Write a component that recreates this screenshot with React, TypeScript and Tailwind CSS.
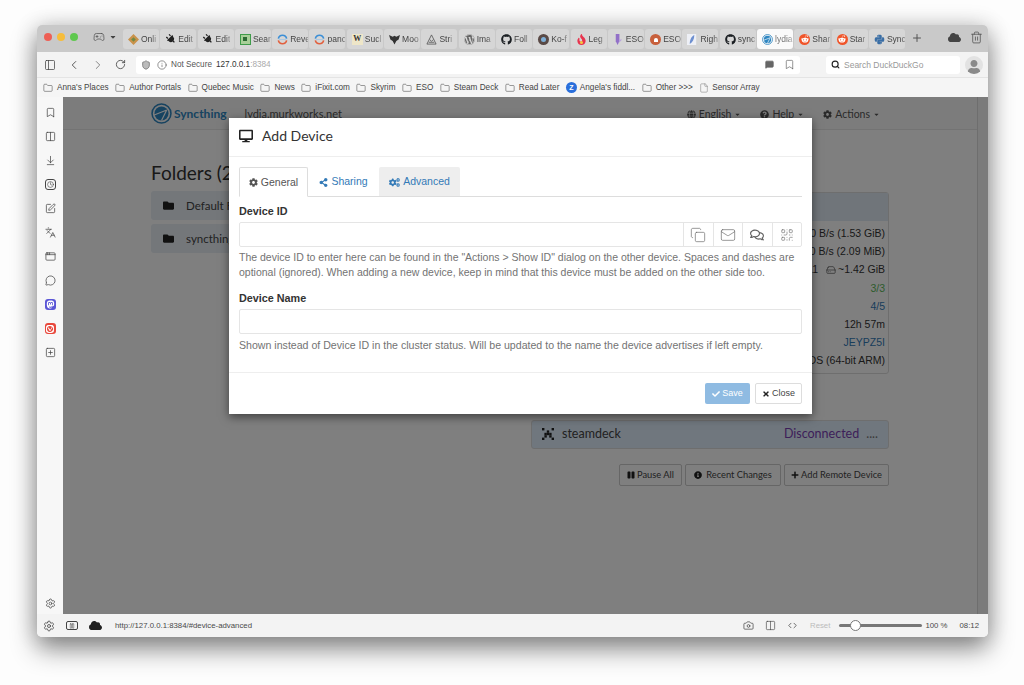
import type { ReactNode } from "react";
import {
  ArrowDownToLine,
  Bookmark,
  Camera,
  ChevronLeft,
  ChevronRight,
  Clock,
  Code,
  Copy,
  File,
  Folder,
  HardDrive,
  Mail,
  MessageCircle,
  PanelLeft,
  Plus,
  QrCode,
  RotateCw,
  Search,
  Settings,
  Shield,
  SquarePen,
  SquarePlus,
  Trash2,
  Columns2,
  Pause,
  Gamepad2,
  Info,
  Languages,
  AppWindow,
  MessageSquare,
} from "lucide-react";
import {
  FaCaretDown,
  FaCheck,
  FaCloud,
  FaCog,
  FaCogs,
  FaDesktop,
  FaFolder,
  FaGithub,
  FaGlobe,
  FaInfoCircle,
  FaMastodon,
  FaPause,
  FaPlus,
  FaPlug,
  FaPython,
  FaQuestionCircle,
  FaRedditAlien,
  FaRegComments,
  FaShareAlt,
  FaTimes,
  FaUser,
  FaWordpress,
  FaFire,
} from "react-icons/fa";
import { SiVivaldi } from "react-icons/si";

function Logo({ size }: { size: number }) {
  return (
    <svg width={size} height={size} viewBox="0 0 24 24" fill="none" className="shrink-0">
      <circle cx="12" cy="12" r="10.8" stroke="#2e86c1" strokeWidth="1.8" />
      <circle cx="12" cy="12" r="8" fill="#2e86c1" />
      <path d="M3 14 L18 8 M18 8 L12 20" stroke="#fff" strokeWidth="1.4" />
    </svg>
  );
}

function Circle({ bg, children }: { bg: string; children?: ReactNode }) {
  return (
    <span className={`flex h-[11px] w-[11px] shrink-0 items-center justify-center rounded-full ${bg}`}>{children}</span>
  );
}

function Arcs() {
  return (
    <svg width="11" height="11" viewBox="0 0 12 12" fill="none">
      <path d="M1.5 5 A4.6 4.6 0 0 1 10.5 5" stroke="#3c8fd6" strokeWidth="1.8" />
      <path d="M10.5 7 A4.6 4.6 0 0 1 1.5 7" stroke="#e2603e" strokeWidth="1.8" />
      <path d="M2 6 H10" stroke="#9cc4e8" strokeWidth="0.8" />
    </svg>
  );
}

const plug = <FaPlug className="h-[10px] w-[10px] -rotate-45 text-[#222]" />;
const reddit = (
  <Circle bg="bg-[#f0552a]">
    <FaRedditAlien className="h-[8px] w-[8px] text-white" />
  </Circle>
);

const tabs: { label: string; icon: ReactNode; active?: boolean }[] = [
  {
    label: "Onli",
    icon: (
      <svg width="11" height="11" viewBox="0 0 12 12">
        <path d="M6 0 L12 6 L6 12 L0 6 Z" fill="#c9924a" />
        <path d="M6 3.5 L8.5 6 L6 8.5 L3.5 6 Z" fill="#6f8a45" />
      </svg>
    ),
  },
  { label: "Edit", icon: plug },
  { label: "Edit", icon: plug },
  {
    label: "Sear",
    icon: (
      <span className="flex h-[11px] w-[11px] items-center justify-center border-[1.5px] border-[#3f9b4a] bg-[#a8cf98]">
        <span className="h-[4px] w-[4px] bg-[#2d6a35]" />
      </span>
    ),
  },
  { label: "Reve", icon: <Arcs /> },
  { label: "panc", icon: <Arcs /> },
  {
    label: "Sucl",
    icon: (
      <span className="flex h-[11px] w-[11px] items-center justify-center bg-[#eee6c8] font-['Liberation_Serif',serif] text-[8px] font-bold leading-none text-[#333]">
        W
      </span>
    ),
  },
  {
    label: "Moo",
    icon: (
      <svg width="11" height="11" viewBox="0 0 12 12">
        <path d="M0 1 L4 3 L6 2 L8 3 L12 1 L10.5 6 L8 7.5 L6 11.5 L4 7.5 L1.5 6 Z" fill="#333" />
      </svg>
    ),
  },
  {
    label: "Stri",
    icon: (
      <svg width="11" height="11" viewBox="0 0 12 12" fill="none" stroke="#555" strokeWidth="0.9">
        <path d="M6 1 L11 11 H1 Z M4 6 L6 8 L8 6 M3 9 H9" />
      </svg>
    ),
  },
  { label: "Ima", icon: <FaWordpress className="h-[11px] w-[11px] text-[#666]" /> },
  { label: "Foll", icon: <FaGithub className="h-[11px] w-[11px] text-[#1b1f23]" /> },
  {
    label: "Ko-f",
    icon: (
      <Circle bg="bg-[#5a4a46]">
        <span className="h-[5px] w-[5px] rounded-full bg-[#7fb0d8]" />
      </Circle>
    ),
  },
  {
    label: "Leg",
    icon: (
      <span className="relative flex h-[11px] w-[11px] items-center justify-center">
        <FaFire className="h-[11px] w-[11px] text-[#e8344e]" />
        <span className="absolute bottom-[1px] h-[3px] w-[3px] rounded-full bg-[#f5c842]" />
      </span>
    ),
  },
  {
    label: "ESO",
    icon: (
      <svg width="11" height="11" viewBox="0 0 12 12">
        <path d="M3 0 H7 V8 L5 12 L3 8 Z" fill="#9270c8" />
        <path d="M7 6 L10 6 L6 10 Z" fill="#b9a4dc" />
      </svg>
    ),
  },
  {
    label: "ESO",
    icon: (
      <Circle bg="bg-[#c8603c]">
        <span className="mt-[2px] h-[4px] w-[4px] rounded-t-full bg-white" />
      </Circle>
    ),
  },
  {
    label: "Righ",
    icon: (
      <svg width="11" height="11" viewBox="0 0 12 12">
        <rect width="10" height="12" fill="#eef0f6" />
        <path d="M8 1 C4 3 3 7 3 11 C6 9 8 6 8 1 Z" fill="#6d8fd0" />
      </svg>
    ),
  },
  { label: "sync", icon: <FaGithub className="h-[11px] w-[11px] text-[#1b1f23]" /> },
  { label: "lydia", icon: <Logo size={11} />, active: true },
  { label: "Shar", icon: reddit },
  { label: "Star", icon: reddit },
  { label: "Sync", icon: <FaPython className="h-[11px] w-[11px] text-[#3a6ea5]" /> },
];

const bookmarks = [
  "Anna's Places",
  "Author Portals",
  "Quebec Music",
  "News",
  "iFixit.com",
  "Skyrim",
  "ESO",
  "Steam Deck",
  "Read Later",
];

const statusRows: [string, string, string][] = [
  ["Download Rate", "0 B/s (1.53 GiB)", "text-[#333]"],
  ["Upload Rate", "0 B/s (2.09 MiB)", "text-[#333]"],
  ["Local State (Total)", "11", "text-[#333]"],
  ["Listeners", "3/3", "text-[#5cb85c]"],
  ["Discovery", "4/5", "text-[#337ab7]"],
  ["Uptime", "12h 57m", "text-[#333]"],
  ["Identification", "JEYPZ5I", "text-[#337ab7]"],
  ["Version", "v1.23.0, macOS (64-bit ARM)", "text-[#333]"],
];

function TopBars() {
  return (
    <>
      <div className="flex h-[27px] items-start bg-[#c9c9c9]">
        <div className="flex h-[23px] w-[86px] shrink-0 items-center gap-[5px] pl-[7px]">
          <span className="h-[8px] w-[8px] rounded-full bg-[#ee5f55]" />
          <span className="h-[8px] w-[8px] rounded-full bg-[#f6bd3b]" />
          <span className="h-[8px] w-[8px] rounded-full bg-[#5fc84f]" />
          <Gamepad2 className="ml-[10px] h-[12px] w-[12px] text-[#555]" strokeWidth={1.5} />
          <FaCaretDown className="-ml-[1px] h-[8px] w-[8px] text-[#444]" />
        </div>
        <div className="mt-[4px] flex gap-[1.3px]">
          {tabs.map((t, i) => (
            <div
              key={i}
              className={`flex h-[20px] w-[36px] items-center gap-[2px] overflow-hidden rounded-[3px] pl-[5px] text-[8.5px] ${
                t.active ? "bg-[#fafafa] text-[#777]" : "bg-[#d6d6d6] text-[#444]"
              }`}
            >
              <span className="flex w-[11px] shrink-0 items-center justify-center">{t.icon}</span>
              <span className="whitespace-nowrap [mask-image:linear-gradient(to_right,black_70%,rgba(0,0,0,0.4))]">
                {t.label}
              </span>
            </div>
          ))}
        </div>
        <Plus className="ml-[6px] mt-[7px] h-[12px] w-[12px] text-[#555]" />
        <div className="ml-auto mt-[6px] flex items-center gap-[9px] pr-[5px]">
          <FaCloud className="h-[13px] w-[13px] text-[#444]" />
          <Trash2 className="h-[13px] w-[13px] text-[#555]" strokeWidth={1.5} />
        </div>
      </div>

      <div className="flex h-[26px] items-center border-b border-[#e4e4e4] bg-[#f3f3f3] text-[#444]">
        <PanelLeft className="ml-[7px] h-[12px] w-[12px]" strokeWidth={1.5} />
        <ChevronLeft className="ml-[11px] h-[14px] w-[14px]" strokeWidth={1.5} />
        <ChevronRight className="ml-[10px] h-[14px] w-[14px] text-[#777]" strokeWidth={1.5} />
        <RotateCw className="ml-[10px] h-[11px] w-[11px]" strokeWidth={1.8} />
        <div className="ml-[10px] flex h-[18px] w-[664px] items-center rounded-[3px] bg-white pl-[5px] text-[8.2px]">
          <Shield className="h-[10px] w-[10px] text-[#777]" fill="#bbb" />
          <Info className="ml-[6px] h-[10px] w-[10px] text-[#555]" strokeWidth={1.5} />
          <span className="ml-[4px] pt-[1px] text-[#555]">Not Secure</span>
          <span className="ml-[4px] pt-[1px] text-[#333]">127.0.0.1</span>
          <span className="pt-[1px] text-[#aaa]">:8384</span>
          <div className="ml-auto mr-[5px] flex items-center gap-[10px]">
            <MessageSquare className="h-[9px] w-[9px] text-[#666]" fill="#666" />
            <Bookmark className="h-[11px] w-[11px] text-[#666]" strokeWidth={1.5} />
          </div>
        </div>
        <div className="ml-[26px] flex h-[18px] w-[134px] items-center rounded-[3px] bg-white pl-[5px] text-[8.5px] text-[#999]">
          <Search className="h-[9px] w-[9px] text-[#222]" strokeWidth={3} />
          <span className="ml-[4px] pt-[1px]">Search DuckDuckGo</span>
        </div>
        <div className="ml-[5px] flex h-[18px] w-[18px] items-end justify-center overflow-hidden rounded-full bg-[#e2e2e2]">
          <FaUser className="h-[14px] w-[14px] text-[#8a8a8a]" />
        </div>
      </div>

      <div className="flex h-[19px] items-center gap-[6.5px] bg-[#f5f5f5] pl-[6px] pt-[1px] text-[8.2px] text-[#444]">
        {bookmarks.map((b) => (
          <div key={b} className="flex items-center gap-[4px]">
            <Folder className="h-[10px] w-[10px] text-[#555]" strokeWidth={1.4} />
            <span>{b}</span>
          </div>
        ))}
        <div className="flex items-center gap-[3px]">
          <span className="flex h-[11px] w-[11px] items-center justify-center rounded-full bg-[#2a6fdb] text-[7px] font-bold leading-none text-white">
            Z
          </span>
          <span>Angela's fiddl...</span>
        </div>
        <div className="flex items-center gap-[4px]">
          <Folder className="h-[10px] w-[10px] text-[#555]" strokeWidth={1.4} />
          <span>Other &gt;&gt;&gt;</span>
        </div>
        <div className="flex items-center gap-[3px]">
          <File className="h-[10px] w-[10px] text-[#777]" strokeWidth={1.2} />
          <span>Sensor Array</span>
        </div>
      </div>
    </>
  );
}

function SidePanel() {
  const cls = "h-[11px] w-[11px] text-[#444]";
  return (
    <div className="flex w-[26px] shrink-0 flex-col items-center gap-[13px] bg-[#f7f7f7] pt-[10px]">
      <Bookmark className={cls} strokeWidth={1.6} />
      <Columns2 className={cls} strokeWidth={1.6} />
      <ArrowDownToLine className={cls} strokeWidth={1.6} />
      <span className="flex h-[11px] w-[11px] items-center justify-center rounded-[3px] border border-[#444]">
        <Clock className="h-[7px] w-[7px] text-[#444]" strokeWidth={2} />
      </span>
      <SquarePen className={cls} strokeWidth={1.6} />
      <Languages className={cls} strokeWidth={1.6} />
      <AppWindow className={cls} strokeWidth={1.6} />
      <MessageCircle className={cls} strokeWidth={1.6} />
      <span className="flex h-[11px] w-[11px] items-center justify-center rounded-[3px] bg-[#5b56d6]">
        <FaMastodon className="h-[9px] w-[9px] text-white" />
      </span>
      <span className="flex h-[11px] w-[11px] items-center justify-center rounded-[3px] bg-[#e8483c]">
        <SiVivaldi className="h-[8px] w-[8px] text-white" />
      </span>
      <SquarePlus className={cls} strokeWidth={1.6} />
      <Settings className={`${cls} mb-[5px] mt-auto`} strokeWidth={1.6} />
    </div>
  );
}

function Identicon() {
  const cells = [
    [0, 0],
    [4, 0],
    [2, 1],
    [1, 2],
    [2, 2],
    [3, 2],
    [1, 3],
    [3, 3],
    [0, 4],
    [4, 4],
  ];
  return (
    <svg width="12" height="12" viewBox="0 0 5 5" className="mr-[8px] shrink-0">
      {cells.map(([x, y]) => (
        <rect key={`${x}-${y}`} x={x} y={y} width="1" height="1" fill="#222" />
      ))}
    </svg>
  );
}

function SyncthingPage() {
  return (
    <div className="flex h-full bg-white font-['Lato',sans-serif] text-[#333]">
      <div className="min-w-0 flex-1">
        <div className="h-[33px] border-b border-[#e7e7e7] bg-[#f8f8f8]">
          <div className="mx-auto flex h-full w-[738px] items-center">
            <Logo size={21} />
            <span className="ml-[2px] mt-[2px] text-[12px] font-bold text-[#2e86c1]">Syncthing</span>
            <span className="ml-[18px] mt-[3px] text-[11px] text-[#555]">lydia.murkworks.net</span>
            <div className="ml-auto flex items-center gap-[19px] pr-[9px] pt-[3px] text-[10.5px] text-[#555]">
              <span className="flex items-center gap-[3px]">
                <FaGlobe className="h-[9px] w-[9px]" />
                English
                <FaCaretDown className="h-[7px] w-[7px]" />
              </span>
              <span className="flex items-center gap-[3px]">
                <FaQuestionCircle className="h-[9px] w-[9px]" />
                Help
                <FaCaretDown className="h-[7px] w-[7px]" />
              </span>
              <span className="flex items-center gap-[3px]">
                <FaCog className="h-[9px] w-[9px]" />
                Actions
                <FaCaretDown className="h-[7px] w-[7px]" />
              </span>
            </div>
          </div>
        </div>
        <div className="mx-auto grid w-[738px] grid-cols-[365px_358px] gap-[15px]">
          <div className="pt-[32px]">
            <h3 className="text-[19px] leading-[22px]">Folders (2)</h3>
            <div className="mt-[7px] flex flex-col gap-[4px]">
              {["Default Folder", "syncthing"].map((f) => (
                <div key={f} className="flex h-[29px] items-center rounded-[3px] bg-[#e8eef4] pl-[12px] text-[11.5px] text-[#444]">
                  <FaFolder className="mr-[12px] h-[11px] w-[11px] text-[#222]" />
                  {f}
                </div>
              ))}
            </div>
          </div>
          <div className="pt-[62px]">
            <div className="rounded-[3px] border border-[#ddd]">
              <div className="h-[28px] bg-[#e0eaf4]" />
              <div className="flex flex-col py-[3px] pl-[11px] pr-[3px] font-['Liberation_Sans',sans-serif] text-[10.5px] leading-[18.2px]">
                {statusRows.map(([k, v, c]) => (
                  <div key={k} className="flex justify-between">
                    <span>{k}</span>
                    <span className={`flex items-center gap-[3px] ${c}`}>
                      {v}
                      {k.startsWith("Local") && (
                        <>
                          <HardDrive className="ml-[5px] h-[10px] w-[10px]" strokeWidth={1.4} />
                          <span className="-ml-[1px]">~1.42 GiB</span>
                        </>
                      )}
                    </span>
                  </div>
                ))}
              </div>
            </div>
            <div className="mt-[46px] flex h-[29px] items-center rounded-[3px] border border-[#ddd] bg-[#e0eefc] pl-[10px] pr-[10px] text-[12.5px]">
              <Identicon />
              <span className="text-[#444]">steamdeck</span>
              <span className="ml-auto text-[#7b3fb3]">Disconnected</span>
              <span className="ml-[7px] text-[#777]">....</span>
            </div>
            <div className="mt-[15px] flex justify-end gap-[3px] text-[9.3px] text-[#444]">
              <span className="flex h-[22px] w-[63px] items-center justify-center gap-[2px] rounded-[2px] border border-[#ccc] bg-white">
                <FaPause className="h-[8px] w-[8px] text-[#222]" />
                Pause All
              </span>
              <span className="flex h-[22px] w-[96px] items-center justify-center gap-[4px] rounded-[2px] border border-[#ccc] bg-white">
                <FaInfoCircle className="h-[8px] w-[8px] text-[#222]" />
                Recent Changes
              </span>
              <span className="flex h-[22px] w-[105px] items-center justify-center gap-[2px] rounded-[2px] border border-[#ccc] bg-white">
                <FaPlus className="h-[8px] w-[8px] text-[#222]" />
                Add Remote Device
              </span>
            </div>
          </div>
        </div>
      </div>
      <div className="w-[11px] shrink-0 border-l border-[#ddd] bg-[#f6f6f6]" />
    </div>
  );
}

function AddDeviceModal() {
  const tools = [
    <Copy key="copy" className="h-[16px] w-[16px]" strokeWidth={1} />,
    <Mail key="mail" className="h-[16px] w-[16px]" strokeWidth={1} />,
    <FaRegComments key="chat" className="h-[14px] w-[14px]" />,
    <QrCode key="qr" className="h-[14px] w-[14px] text-[#777]" strokeWidth={1.2} />,
  ];
  return (
    <div className="absolute left-[166px] top-[21px] w-[583px] bg-white font-['Liberation_Sans',sans-serif] text-[10.5px] text-[#555] shadow-[0_3px_9px_rgba(0,0,0,0.5)]">
      <div className="flex h-[39px] items-center gap-[9px] border-b border-[#eee] pb-[3px] pl-[10px]">
        <FaDesktop className="h-[14px] w-[14px] text-[#222]" />
        <span className="font-['Lato',sans-serif] text-[14px] text-[#333]">Add Device</span>
      </div>
      <div className="px-[10px] pt-[10px]">
        <div className="flex h-[30px] border-b border-[#ddd] text-[#337ab7]">
          <div className="-mb-px flex h-[30px] w-[69px] items-center justify-center gap-[3px] rounded-t-[2px] border border-[#ddd] border-b-white bg-white pt-[1px] text-[#555]">
            <FaCog className="h-[9px] w-[9px]" />
            General
          </div>
          <div className="flex w-[71px] items-center justify-center gap-[3px] pt-[1px]">
            <FaShareAlt className="h-[9px] w-[9px]" />
            Sharing
          </div>
          <div className="flex h-[29px] w-[81px] items-center justify-center gap-[3px] rounded-t-[2px] bg-[#eee] pt-[1px]">
            <FaCogs className="h-[11px] w-[11px]" />
            Advanced
          </div>
        </div>
        <div className="pt-[8px]">
          <label className="block text-[10.8px] font-bold leading-[13px] text-[#333]">Device ID</label>
          <div className="mt-[4px] flex h-[25px] rounded-[2px] border border-[#e5e5e5]">
            <div className="flex-1" />
            {tools.map((t, i) => (
              <div key={i} className="flex w-[29.5px] items-center justify-center border-l border-[#e5e5e5] text-[#666]">
                {t}
              </div>
            ))}
          </div>
          <p className="mt-[2.5px] whitespace-nowrap leading-[15.5px] text-[#737373]">
            The device ID to enter here can be found in the "Actions &gt; Show ID" dialog on the other device. Spaces and dashes are
            <br />
            optional (ignored). When adding a new device, keep in mind that this device must be added on the other side too.
          </p>
        </div>
        <div className="pt-[11px]">
          <label className="block text-[10.8px] font-bold leading-[13px] text-[#333]">Device Name</label>
          <div className="mt-[4.5px] h-[25px] rounded-[2px] border border-[#e5e5e5]" />
          <p className="mt-[4px] text-[10.6px] leading-[15.5px] text-[#737373]">
            Shown instead of Device ID in the cluster status. Will be updated to the name the device advertises if left empty.
          </p>
        </div>
      </div>
      <div className="mt-[18.5px] flex h-[42px] items-center justify-end gap-[5px] border-t border-[#eee] pr-[10px] text-[9px]">
        <div className="flex h-[21px] w-[45px] items-center justify-center gap-[2px] rounded-[2px] bg-[#8fbbe2] text-white">
          <FaCheck className="h-[8px] w-[8px]" />
          Save
        </div>
        <div className="flex h-[21px] w-[47px] items-center justify-center gap-[2px] rounded-[2px] border border-[#ddd] text-[#444]">
          <FaTimes className="h-[8px] w-[8px] text-[#222]" />
          Close
        </div>
      </div>
    </div>
  );
}

function StatusBar() {
  return (
    <div className="flex h-[23px] items-center bg-[#f3f3f3] pl-[6px] font-['Liberation_Sans',sans-serif] text-[7.8px] text-[#4a4a4a]">
      <Settings className="h-[12px] w-[12px] text-[#444]" strokeWidth={1.6} />
      <span className="ml-[11px] flex h-[9px] w-[12px] items-center justify-center rounded-[2px] border border-[#444]">
        <Pause className="h-[6px] w-[6px]" strokeWidth={2} />
      </span>
      <FaCloud className="ml-[11px] h-[13px] w-[13px] text-[#222]" />
      <span className="ml-[13px]">http://127.0.0.1:8384/#device-advanced</span>
      <Camera className="ml-auto h-[11px] w-[11px] text-[#444]" strokeWidth={1.6} />
      <Columns2 className="ml-[11px] h-[11px] w-[11px] text-[#444]" strokeWidth={1.4} />
      <Code className="ml-[12px] h-[9px] w-[9px] text-[#444]" strokeWidth={2} />
      <span className="ml-[13px] text-[#bbb]">Reset</span>
      <div className="relative ml-[9px] h-[3px] w-[83px] rounded-full bg-[#777]">
        <span className="absolute -top-[4.5px] left-[11px] h-[11px] w-[11px] rounded-full border border-[#777] bg-white" />
      </div>
      <span className="ml-[3px]">100 %</span>
      <span className="ml-[12px] mr-[9px]">08:12</span>
    </div>
  );
}

export default function App() {
  return (
    <div className="h-[685px] w-[1024px] overflow-hidden bg-[#fdfdfd] pl-[37px] pt-[25px] font-['Liberation_Sans',sans-serif]">
      <div className="flex h-[612px] w-[951px] flex-col overflow-hidden rounded-[5px] shadow-[0_12px_26px_rgba(0,0,0,0.45),0_0_22px_rgba(0,0,0,0.16)]">
        <TopBars />
        <div className="flex min-h-0 flex-1">
          <SidePanel />
          <div className="relative min-w-0 flex-1">
            <SyncthingPage />
            <div className="absolute inset-0 bg-black/50" />
            <AddDeviceModal />
          </div>
        </div>
        <StatusBar />
      </div>
    </div>
  );
}
